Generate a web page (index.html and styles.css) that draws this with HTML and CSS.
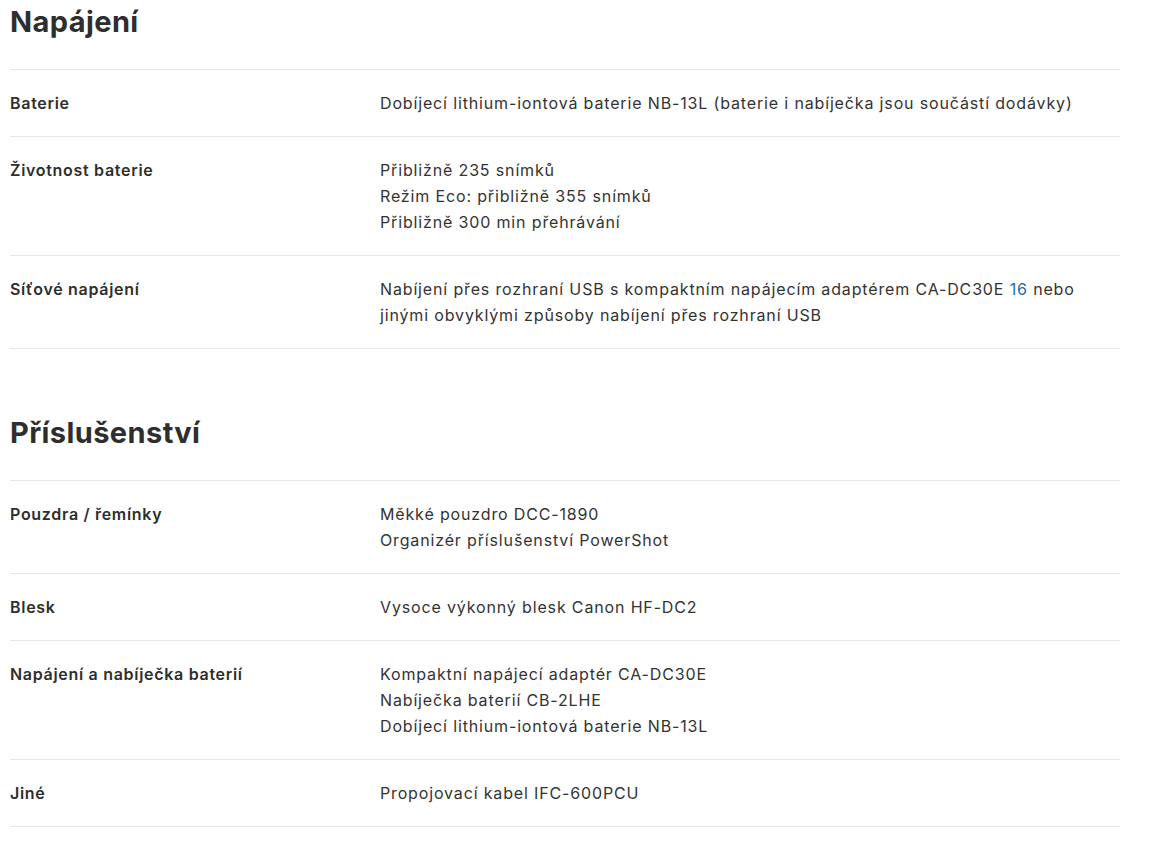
FILE: index.html
```html
<!DOCTYPE html>
<html lang="cs">
<head>
<meta charset="utf-8">
<title>Specifikace</title>
<link rel="stylesheet" href="styles.css">
</head>
<body>
<div class="page">
  <section class="spec">
    <h2 class="spec-title">Napájení</h2>
    <div class="row">
      <div class="label">Baterie</div>
      <div class="value">Dobíjecí lithium-iontová baterie NB-13L (baterie i nabíječka jsou součástí dodávky)</div>
    </div>
    <div class="row">
      <div class="label">Životnost baterie</div>
      <div class="value">Přibližně 235 snímků<br>Režim Eco: přibližně 355 snímků<br>Přibližně 300 min přehrávání</div>
    </div>
    <div class="row">
      <div class="label">Síťové napájení</div>
      <div class="value">Nabíjení přes rozhraní USB s kompaktním napájecím adaptérem CA-DC30E <a class="ref" href="#">16</a> nebo<br>jinými obvyklými způsoby nabíjení přes rozhraní USB</div>
    </div>
  </section>
  <section class="spec">
    <h2 class="spec-title">Příslušenství</h2>
    <div class="row">
      <div class="label">Pouzdra / řemínky</div>
      <div class="value">Měkké pouzdro DCC-1890<br>Organizér příslušenství PowerShot</div>
    </div>
    <div class="row">
      <div class="label">Blesk</div>
      <div class="value">Vysoce výkonný blesk Canon HF-DC2</div>
    </div>
    <div class="row">
      <div class="label">Napájení a nabíječka baterií</div>
      <div class="value">Kompaktní napájecí adaptér CA-DC30E<br>Nabíječka baterií CB-2LHE<br>Dobíjecí lithium-iontová baterie NB-13L</div>
    </div>
    <div class="row">
      <div class="label">Jiné</div>
      <div class="value">Propojovací kabel IFC-600PCU</div>
    </div>
  </section>
</div>
</body>
</html>
```
FILE: styles.css
```css
html, body {
  margin: 0;
  padding: 0;
  background: #ffffff;
}
body {
  font-family: "Inter", "Open Sans", "Liberation Sans", sans-serif;
  color: #333333;
  font-size: 16px;
}
.page {
  width: 1110px;
  padding-left: 10px;
}
.spec + .spec {
  margin-top: 62px;
}
.spec-title {
  margin: 0 0 25px 0;
  font-size: 29px;
  line-height: 44px;
  font-weight: 700;
  letter-spacing: 0.4px;
  color: #2e2e2e;
}
.row {
  display: grid;
  grid-template-columns: 370px 1fr;
  border-top: 1px solid #e6e6e6;
  padding: 20px 0;
  line-height: 26px;
}
.row:last-child {
  border-bottom: 1px solid #e6e6e6;
}
.label {
  font-weight: 600;
  letter-spacing: 0.7px;
  color: #2e2e2e;
}
.value {
  letter-spacing: 0.85px;
  color: #333333;
}
.ref {
  color: #1c6bb0;
  text-decoration: none;
}
```
